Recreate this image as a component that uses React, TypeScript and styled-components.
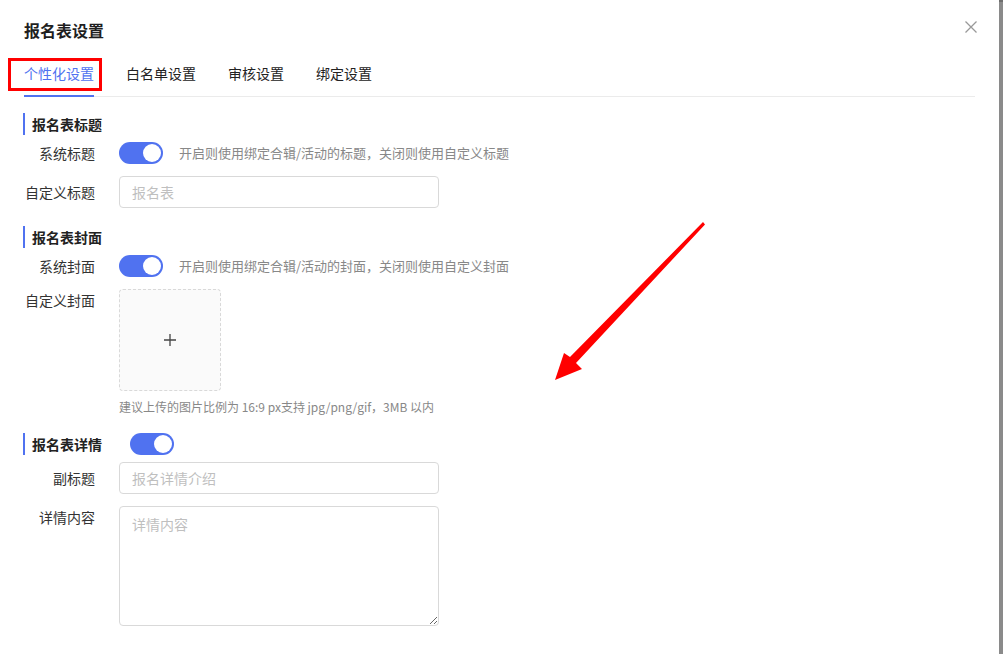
import React from "react";
import styled, { createGlobalStyle } from "styled-components";

const Global = createGlobalStyle`
  html, body { margin: 0; padding: 0; }
  body {
    font-family: "Noto Sans CJK SC", "Noto Sans", "Liberation Sans", sans-serif;
    background: #ffffff;
    -webkit-font-smoothing: antialiased;
  }
  * { box-sizing: border-box; }
`;

const BLUE = "#5072f0";

const Page = styled.div`
  position: relative;
  display: flex;
  width: 100%;
  height: 100vh;
  overflow: hidden;
`;

const Dialog = styled.div`
  flex: 1;
  background: #ffffff;
  padding: 0 24px;
  display: flex;
  flex-direction: column;
`;

const EdgeBar = styled.div`
  width: 4px;
  background: #8a8a8a;
  border-top: 2px solid #6e6e6e;
`;

const Header = styled.div`
  display: flex;
  justify-content: space-between;
  align-items: flex-start;
  padding-top: 18px;
  height: 43px;
`;

const Title = styled.div`
  font-size: 16px;
  line-height: 24px;
  font-weight: 600;
  color: #1f1f1f;
`;

const CloseButton = styled.button`
  border: none;
  background: none;
  padding: 0;
  margin: 3px -2px 0 0;
  width: 12px;
  height: 12px;
  display: flex;
  cursor: pointer;
`;

const TabNav = styled.div`
  display: flex;
  gap: 32px;
  box-shadow: inset 0 -1px 0 #ebebeb;
`;

const Tab = styled.div<{ $active?: boolean }>`
  font-size: 14px;
  line-height: 22px;
  padding: 19px 0 11px;
  color: ${(p) => (p.$active ? BLUE : "#222")};
  border-bottom: 2px solid ${(p) => (p.$active ? BLUE : "transparent")};
`;

const SectionHeading = styled.div<{ $mt: number }>`
  display: flex;
  align-items: center;
  margin-top: ${(p) => p.$mt}px;
`;

const HeadingText = styled.div`
  font-size: 14px;
  line-height: 22px;
  font-weight: 600;
  color: #222;
  border-left: 2px solid ${BLUE};
  padding-left: 7px;
  margin-left: -1px;
`;

const HeadingSwitch = styled.div`
  margin-left: 28px;
  display: flex;
`;

const FormRow = styled.div<{ $mt: number; $top?: boolean }>`
  display: flex;
  align-items: ${(p) => (p.$top ? "flex-start" : "center")};
  margin-top: ${(p) => p.$mt}px;
`;

const Label = styled.div`
  width: 71px;
  margin-right: 24px;
  text-align: right;
  font-size: 14px;
  line-height: 22px;
  color: #333;
  white-space: nowrap;
`;

const SwitchTrack = styled.div<{ $on?: boolean }>`
  width: 44px;
  height: 22px;
  border-radius: 11px;
  background: ${(p) => (p.$on ? BLUE : "#ccc")};
  display: flex;
  align-items: center;
  justify-content: ${(p) => (p.$on ? "flex-end" : "flex-start")};
  padding: 0 2px;
  flex-shrink: 0;
`;

const SwitchKnob = styled.div`
  width: 18px;
  height: 18px;
  border-radius: 50%;
  background: #fff;
`;

const Hint = styled.div`
  margin-left: 16px;
  font-size: 13px;
  line-height: 22px;
  color: #888;
  white-space: nowrap;
`;

const TextInput = styled.input`
  width: 320px;
  height: 32px;
  border: 1px solid #d9d9d9;
  border-radius: 4px;
  padding: 0 12px;
  font-family: inherit;
  font-size: 14px;
  color: #333;
  outline: none;
  &::placeholder { color: #bfbfbf; }
`;

const TextArea = styled.textarea`
  width: 320px;
  height: 120px;
  border: 1px solid #d9d9d9;
  border-radius: 4px;
  padding: 6px 12px;
  font-family: inherit;
  font-size: 14px;
  line-height: 22px;
  color: #333;
  outline: none;
  resize: vertical;
  display: block;
  &::placeholder { color: #bfbfbf; }
`;

const Upload = styled.div`
  width: 102px;
  height: 102px;
  border: 1px dashed #d9d9d9;
  border-radius: 4px;
  background: #fafafa;
  display: flex;
  align-items: center;
  justify-content: center;
`;

const UploadTip = styled.div`
  margin: 6px 0 0 95px;
  font-size: 12px;
  line-height: 20px;
  color: #888;
  white-space: nowrap;
`;

const Annotation = styled.div`
  position: absolute;
  left: 8px;
  top: 58px;
  width: 94px;
  height: 33px;
  border: 3px solid #ff0000;
  pointer-events: none;
`;

const ArrowLayer = styled.svg`
  position: absolute;
  left: 0;
  top: 0;
  pointer-events: none;
`;

const Switch = ({ on = true }: { on?: boolean }) => (
  <SwitchTrack $on={on}>
    <SwitchKnob />
  </SwitchTrack>
);

export default function App() {
  const tabs = ["个性化设置", "白名单设置", "审核设置", "绑定设置"];
  return (
    <>
      <Global />
      <Page>
        <Dialog>
          <Header>
            <Title>报名表设置</Title>
            <CloseButton aria-label="关闭">
              <svg width="12" height="12" viewBox="0 0 12 12">
                <path d="M0.5 0.5 L11.5 11.5 M11.5 0.5 L0.5 11.5" stroke="#999" strokeWidth="1.3" fill="none" />
              </svg>
            </CloseButton>
          </Header>
          <TabNav>
            {tabs.map((t, i) => (
              <Tab key={t} $active={i === 0}>
                {t}
              </Tab>
            ))}
          </TabNav>

          <SectionHeading $mt={16}>
            <HeadingText>报名表标题</HeadingText>
          </SectionHeading>
          <FormRow $mt={7}>
            <Label>系统标题</Label>
            <Switch />
            <Hint>开启则使用绑定合辑/活动的标题，关闭则使用自定义标题</Hint>
          </FormRow>
          <FormRow $mt={12}>
            <Label>自定义标题</Label>
            <TextInput placeholder="报名表" />
          </FormRow>

          <SectionHeading $mt={18}>
            <HeadingText>报名表封面</HeadingText>
          </SectionHeading>
          <FormRow $mt={7}>
            <Label>系统封面</Label>
            <Switch />
            <Hint>开启则使用绑定合辑/活动的封面，关闭则使用自定义封面</Hint>
          </FormRow>
          <FormRow $mt={12} $top>
            <Label>自定义封面</Label>
            <Upload>
              <svg width="14" height="14" viewBox="0 0 14 14">
                <path d="M7 1 V13 M1 7 H13" stroke="#444" strokeWidth="1.3" fill="none" />
              </svg>
            </Upload>
          </FormRow>
          <UploadTip>建议上传的图片比例为 16:9 px支持 jpg/png/gif，3MB 以内</UploadTip>

          <SectionHeading $mt={16}>
            <HeadingText>报名表详情</HeadingText>
            <HeadingSwitch>
              <Switch />
            </HeadingSwitch>
          </SectionHeading>
          <FormRow $mt={7}>
            <Label>副标题</Label>
            <TextInput placeholder="报名详情介绍" />
          </FormRow>
          <FormRow $mt={12} $top>
            <Label>详情内容</Label>
            <TextArea placeholder="详情内容" />
          </FormRow>
        </Dialog>
        <EdgeBar />

        <Annotation />
        <ArrowLayer width="1003" height="654" viewBox="0 0 1003 654">
          <polygon
            points="703,222 705,224.5 576,363 582,369 555,380 564,353 570,357"
            fill="#ff0000"
          />
        </ArrowLayer>
      </Page>
    </>
  );
}
